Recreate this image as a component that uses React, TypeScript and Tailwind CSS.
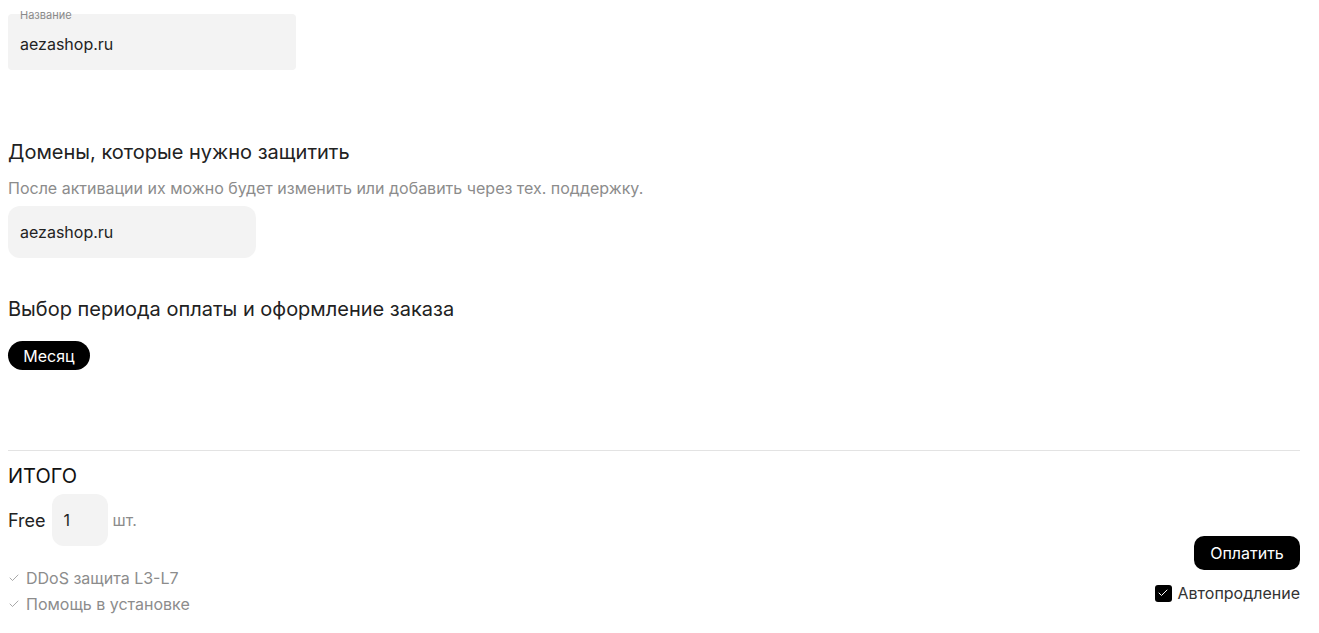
import { Check } from "lucide-react";

export default function App() {
  return (
    <div
      className="min-h-[633px] bg-white pl-2 pr-[19px] text-[#1f1f1f]"
      style={{ fontFamily: "Inter, 'Noto Sans', sans-serif" }}
    >
      {/* Название */}
      <div className="pt-[14px]">
        <div className="relative flex h-14 w-[288px] items-end rounded bg-[#f3f3f3] px-3 pb-[16px]">
          <span className="absolute left-3 top-[-4px] text-[11px] leading-none text-[#8a8a8a]">
            Название
          </span>
          <span className="text-[16px] leading-5 text-[#222]">aezashop.ru</span>
        </div>
      </div>

      {/* Домены */}
      <div className="mt-[68px]">
        <h2 className="text-[20px] leading-7 text-[#222]">
          Домены, которые нужно защитить
        </h2>
        <p className="mt-[10px] text-[16px] leading-6 text-[#8c8c8c]">
          После активации их можно будет изменить или добавить через тех. поддержку.
        </p>
        <div className="mt-[6px] flex h-[52px] w-[248px] items-center rounded-xl bg-[#f3f3f3] px-3">
          <span className="text-[16px] text-[#222]">aezashop.ru</span>
        </div>
      </div>

      {/* Период */}
      <div className="mt-[37px]">
        <h2 className="text-[20px] leading-7 text-[#222]">
          Выбор периода оплаты и оформление заказа
        </h2>
        <button className="mt-[18px] h-[29px] w-[82px] rounded-full bg-black text-[16px] text-white">
          Месяц
        </button>
      </div>

      <div className="mt-[80px] h-px w-full bg-[#e3e3e3]" />

      {/* Итого */}
      <div className="flex items-end justify-between">
        <div className="pb-[8px]">
          <div className="mt-[11px] text-[20px] leading-7 text-[#111]">ИТОГО</div>
          <div className="mt-[4px] flex items-center">
            <span className="text-[18px] text-[#222]">Free</span>
            <div className="ml-[6px] flex h-[52px] w-[56px] items-center rounded-xl bg-[#f3f3f3] px-3 text-[16px] text-[#222]">
              1
            </div>
            <span className="ml-[5px] text-[16px] text-[#8c8c8c]">шт.</span>
          </div>
          <ul className="mt-[22px] flex flex-col gap-[6px] text-[16px] leading-5 text-[#8c8c8c]">
            <li className="flex items-center gap-[6px]">
              <Check className="h-3 w-3" strokeWidth={1.5} />
              DDoS защита L3-L7
            </li>
            <li className="flex items-center gap-[6px]">
              <Check className="h-3 w-3" strokeWidth={1.5} />
              Помощь в установке
            </li>
          </ul>
        </div>
        <div className="flex flex-col items-end pb-[19px]">
          <button className="h-[34px] w-[106px] rounded-[10px] bg-black text-[16px] text-white">
            Оплатить
          </button>
          <label className="mt-[13px] flex items-center gap-[6px] text-[16px] leading-5 text-[#333]">
            <span className="flex h-[17px] w-[17px] items-center justify-center rounded-[3px] bg-black">
              <Check className="h-3 w-3 text-white" strokeWidth={2} />
            </span>
            Автопродление
          </label>
        </div>
      </div>
    </div>
  );
}
